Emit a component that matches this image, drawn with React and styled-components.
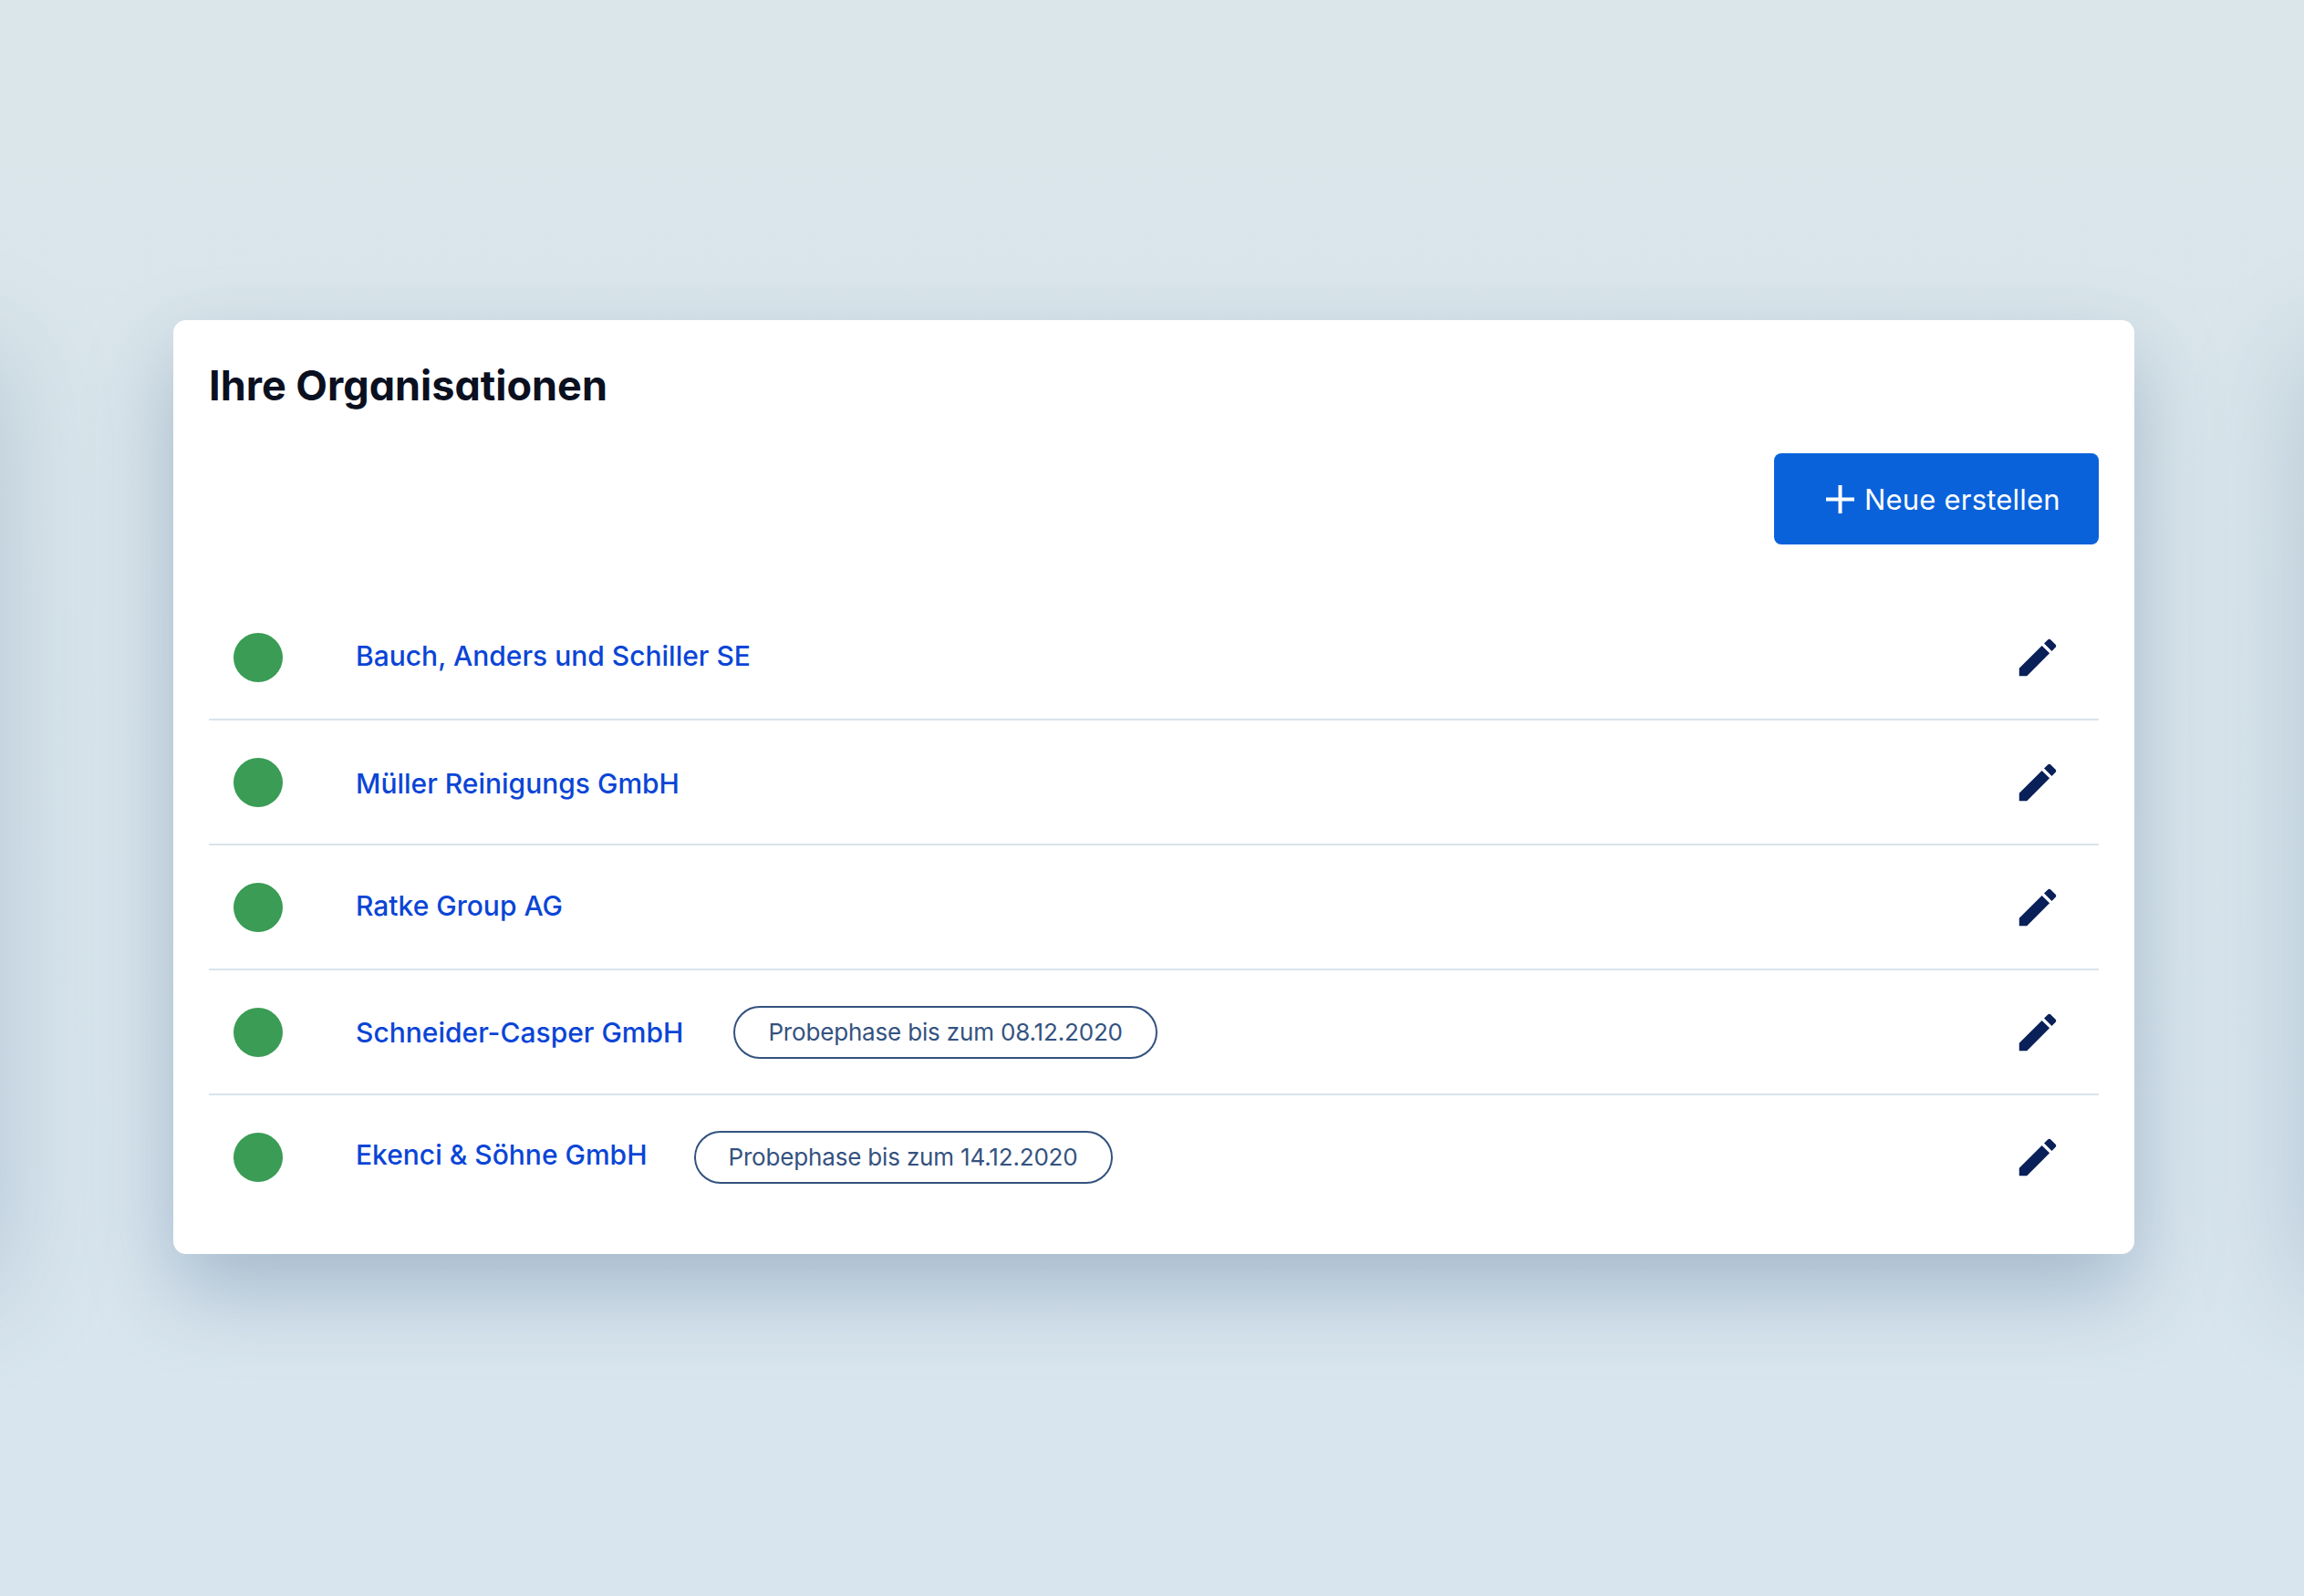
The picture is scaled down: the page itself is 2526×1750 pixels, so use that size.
import React from "react";
import styled, { createGlobalStyle } from "styled-components";

const cardShadow = "0 38px 90px rgba(92, 125, 155, 0.42)";

const GlobalStyle = createGlobalStyle`
  html, body {
    margin: 0;
    padding: 0;
  }
  body {
    font-family: Inter, "Liberation Sans", sans-serif;
    background: #d9e5ee;
  }
`;

const Page = styled.div`
  position: relative;
  width: 2526px;
  height: 1750px;
  overflow: hidden;
  box-sizing: border-box;
  padding: 351px 186px 0 190px;
  background: linear-gradient(180deg, #dbe6eb 0%, #d9e5ec 40%, #d8e5ef 100%);
`;

/* neighbouring slides, only their shadow reaches into the page */
const SideSlide = styled.div`
  position: absolute;
  top: 351px;
  ${({ $side }) => ($side === "left" ? "right: 100%;" : "left: 100%;")}
  width: 2150px;
  height: 1024px;
  border-radius: 14px;
  background: #d9e5ee;
  box-shadow: 0 38px 120px rgba(92, 125, 155, 0.3);
`;

const Card = styled.section`
  position: relative;
  box-sizing: border-box;
  width: 2150px;
  height: 1024px;
  padding: 45px 39px 37px 39px;
  background: #fff;
  border-radius: 14px;
  box-shadow: ${cardShadow};
`;

const Title = styled.h1`
  margin: 0;
  font-size: 45px;
  line-height: 54px;
  font-weight: 700;
  color: #0a101f;
  font-feature-settings: "cv11" 1;
`;

const Toolbar = styled.div`
  display: flex;
  justify-content: flex-end;
  margin-top: 47px;
`;

const CreateButton = styled.button`
  display: flex;
  align-items: center;
  gap: 11px;
  width: 356px;
  height: 100px;
  padding: 0 0 0 57px;
  border: 0;
  border-radius: 8px;
  background: #0a62db;
  color: #fff;
  font-family: inherit;
  font-size: 31px;
  letter-spacing: 0.2px;
  line-height: 40px;
  font-weight: 400;
`;

const ButtonLabel = styled.span`
  margin-top: 2px;
`;

const List = styled.ul`
  list-style: none;
  margin: 56px 0 0;
  padding: 0;
`;

const Row = styled.li`
  display: flex;
  align-items: center;
  box-sizing: border-box;
  height: 137px;
  padding: 0 40px 0 27px;
  border-bottom: 2px solid ${({ $last }) => ($last ? "transparent" : "#d8e4ec")};
`;

const StatusDot = styled.span`
  flex: none;
  width: 54px;
  height: 54px;
  margin-right: 80px;
  border-radius: 50%;
  background: #3a9c55;
`;

const OrgLink = styled.a`
  margin-top: ${({ $shift }) => $shift || 0}px;
  color: #0a45d6;
  font-size: 30px;
  font-weight: 500;
  text-decoration: none;
`;

const TrialPill = styled.span`
  box-sizing: border-box;
  display: flex;
  align-items: center;
  height: 58px;
  margin-left: ${({ $gap }) => $gap}px;
  padding: 0 36px;
  border: 2px solid #34527f;
  border-radius: 29px;
  color: #34527f;
  font-size: 26px;
  letter-spacing: -0.17px;
`;

const EditButton = styled.button`
  display: flex;
  margin-left: auto;
  padding: 0;
  border: 0;
  background: none;
  color: #0a2058;
`;

const PencilIcon = () => (
  <svg width="54" height="54" viewBox="0 0 24 24" fill="currentColor" aria-hidden="true">
    <path d="M3 17.25V21h3.75L17.81 9.94l-3.75-3.75L3 17.25zM20.71 7.04c.39-.39.39-1.02 0-1.41l-2.34-2.34c-.39-.39-1.02-.39-1.41 0l-1.83 1.83 3.75 3.75 1.83-1.83z" />
  </svg>
);

const PlusIcon = () => (
  <svg width="31" height="31" viewBox="0 0 31 31" stroke="currentColor" strokeWidth="4" aria-hidden="true">
    <path d="M15.5 0v31M0 15.5h31" />
  </svg>
);

const organisations = [
  { name: "Bauch, Anders und Schiller SE", shift: -3 },
  { name: "Müller Reinigungs GmbH", shift: 2 },
  { name: "Ratke Group AG", shift: -3 },
  { name: "Schneider-Casper GmbH", trial: "Probephase bis zum 08.12.2020", gap: 55 },
  { name: "Ekenci & Söhne GmbH", shift: -5, trial: "Probephase bis zum 14.12.2020", gap: 51 },
];

const App = () => (
  <Page>
    <GlobalStyle />
    <SideSlide $side="left" />
    <SideSlide $side="right" />
    <Card>
      <Title>Ihre Organisationen</Title>
      <Toolbar>
        <CreateButton>
          <PlusIcon />
          <ButtonLabel>Neue erstellen</ButtonLabel>
        </CreateButton>
      </Toolbar>
      <List>
        {organisations.map((org, i) => (
          <Row key={org.name} $last={i === organisations.length - 1}>
            <StatusDot />
            <OrgLink href="#" $shift={org.shift}>{org.name}</OrgLink>
            {org.trial && <TrialPill $gap={org.gap}>{org.trial}</TrialPill>}
            <EditButton aria-label="Bearbeiten">
              <PencilIcon />
            </EditButton>
          </Row>
        ))}
      </List>
    </Card>
  </Page>
);

export default App;
